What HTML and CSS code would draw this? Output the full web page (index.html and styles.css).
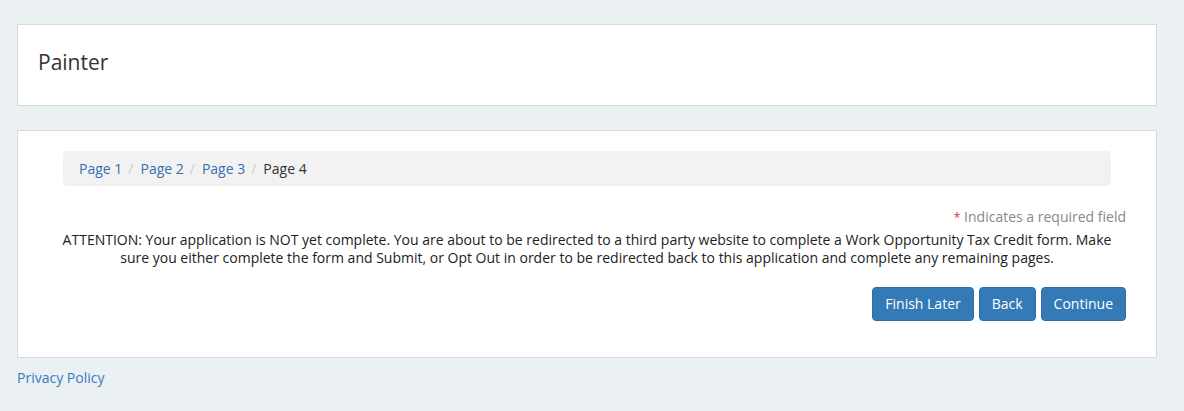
FILE: index.html
```html
<!DOCTYPE html>
<html>
<head>
<meta charset="utf-8">
<link rel="stylesheet" href="styles.css">
</head>
<body>
<div class="page">
  <div class="panel panel-title">
    <h1 class="title">Painter</h1>
  </div>
  <div class="panel panel-main">
    <ol class="breadcrumb">
      <li><a href="#">Page 1</a></li>
      <li><a href="#">Page 2</a></li>
      <li><a href="#">Page 3</a></li>
      <li class="active">Page 4</li>
    </ol>
    <div class="required"><span class="star">*</span> Indicates a required field</div>
    <p class="attention">ATTENTION: Your application is NOT yet complete. You are about to be redirected to a third party website to complete a Work Opportunity Tax Credit form. Make sure you either complete the form and Submit, or Opt Out in order to be redirected back to this application and complete any remaining pages.</p>
    <div class="actions">
      <button class="btn">Finish Later</button>
      <button class="btn">Back</button>
      <button class="btn">Continue</button>
    </div>
  </div>
  <a class="privacy" href="#">Privacy Policy</a>
</div>
</body>
</html>
```

FILE: styles.css
```css
html, body {
  margin: 0;
  padding: 0;
  background: #ebf0f3;
  font-family: "Open Sans", "Liberation Sans", sans-serif;
  font-size: 14px;
  line-height: 20px;
  color: #333;
}
.page {
  width: 1140px;
  padding: 24px 0 0 17px;
}
.panel {
  background: #fff;
  border: 1px solid #d9d9d9;
}
.panel-title {
  height: 80px;
  display: flex;
  align-items: center;
  padding: 0 20px;
}
.title {
  margin: 0 0 6px 0;
  font-size: 21px;
  font-weight: 400;
  color: #333;
}
.panel-main {
  margin-top: 24px;
  padding: 20px 30px 36px 30px;
}
.breadcrumb {
  list-style: none;
  margin: 0 15px;
  padding: 8px 16px 7px 16px;
  background: #f2f2f2;
  border-radius: 4px;
  display: flex;
}
.breadcrumb li + li::before {
  content: "/";
  color: #ccc;
  padding: 0 7px 0 6px;
}
.breadcrumb a {
  color: #3470ae;
  text-decoration: none;
}
.breadcrumb .active {
  color: #333;
}
.required {
  margin-top: 21px;
  text-align: right;
  color: #888;
  line-height: 20px;
}
.star {
  color: #e0313a;
  font-size: 12px;
}
.attention {
  margin: 3px 0 0 0;
  text-align: center;
  line-height: 18px;
  color: #222;
}
.actions {
  margin-top: 20px;
  display: flex;
  justify-content: flex-end;
  gap: 5px;
}
.btn {
  font-family: inherit;
  font-size: 14px;
  line-height: 20px;
  padding: 6px 12px;
  color: #fff;
  background: #337ab7;
  border: 1px solid #2e6da4;
  border-radius: 4px;
}
.privacy {
  display: inline-block;
  margin-top: 10px;
  color: #3a7abf;
  text-decoration: none;
}
```
